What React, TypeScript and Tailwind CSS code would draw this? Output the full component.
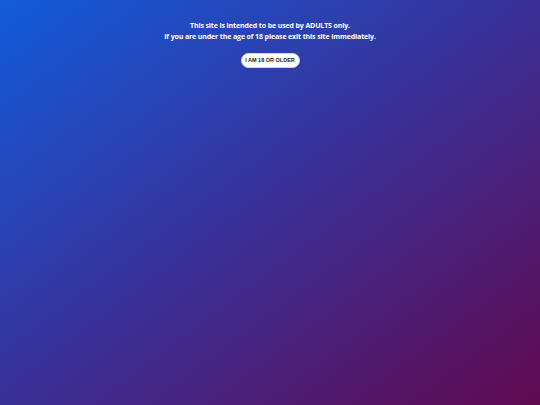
export default function App() {
  return (
    <div className="w-[540px] h-[405px] bg-[linear-gradient(to_bottom_right,#125cdb,#3a3097_50%,#610a4f)] flex flex-col items-center pt-[20px]">
      <p className="text-white font-bold text-[7px] tracking-[-0.12px] leading-[11px] text-center font-['Open_Sans',sans-serif]">
        This site is intended to be used by ADULTS only.
        <br />
        If you are under the age of 18 please exit this site immediately.
      </p>
      <button
        type="button"
        className="mt-[11px] h-[15px] w-[59px] rounded-full bg-white border border-[#d4d4d4] text-[5.5px] font-bold text-[#222] font-['Liberation_Sans',Arial,sans-serif] leading-none whitespace-nowrap"
      >
        I AM 18 OR OLDER
      </button>
    </div>
  );
}
